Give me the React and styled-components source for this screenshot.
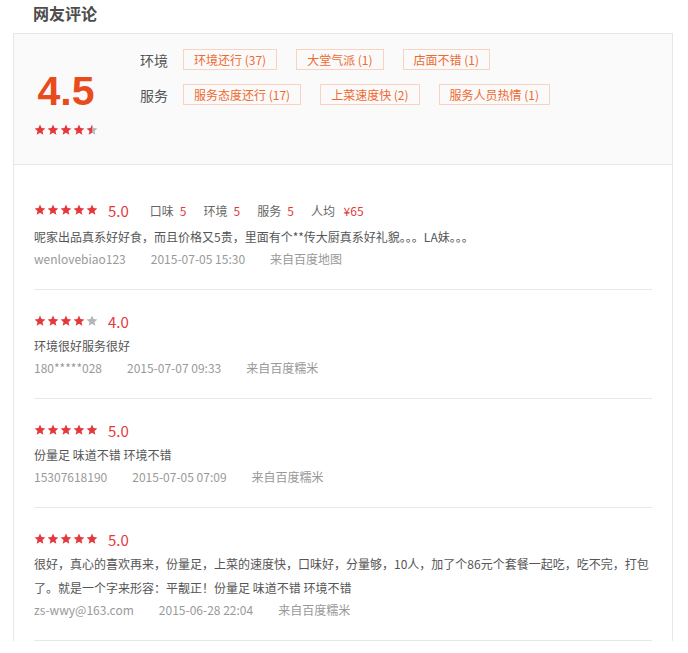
import React from 'react';
import styled, { createGlobalStyle } from 'styled-components';

const GlobalStyle = createGlobalStyle`
  html, body {
    margin: 0;
    padding: 0;
    overflow: hidden;
    background: #fff;
  }
  body {
    font-family: "Noto Sans CJK SC", "Liberation Sans", sans-serif;
    color: #555;
  }
`;

const Page = styled.div`
  width: 688px;
`;

const Title = styled.h2`
  margin: 0;
  height: 33px;
  line-height: 27px;
  padding-left: 33px;
  font-size: 16px;
  font-weight: bold;
  color: #4d4d4d;
`;

const Panel = styled.section`
  margin-left: 13px;
  width: 660px;
  box-sizing: border-box;
  border: 1px solid #e6e6e6;
  border-bottom: none;
`;

const Summary = styled.div`
  display: flex;
  height: 130px;
  background: #fafafa;
  border-bottom: 1px solid #e6e6e6;
`;

const ScoreBox = styled.div`
  width: 104px;
  padding-top: 36px;
  display: flex;
  flex-direction: column;
  align-items: center;
`;

const BigScore = styled.div`
  font-size: 41px;
  line-height: 42px;
  font-weight: bold;
  color: #e84c1d;
  font-family: "Liberation Sans", "Noto Sans CJK SC", sans-serif;
`;

const Stars = styled.div`
  display: flex;
  gap: 1px;
  margin-top: ${p => p.$top || 0}px;
`;

const Tags = styled.div`
  margin-left: 22px;
  padding-top: 15px;
  display: flex;
  flex-direction: column;
  gap: 14px;
`;

const TagRow = styled.div`
  display: flex;
  align-items: center;
`;

const TagLabel = styled.span`
  font-size: 14px;
  color: #555;
  margin-right: 15px;
`;

const Tag = styled.span`
  height: 21px;
  box-sizing: border-box;
  line-height: 19px;
  padding: 0 10px;
  margin-right: 19px;
  border: 1px solid #f9d3bf;
  font-size: 12px;
  color: #f0692e;
`;

const List = styled.div`
  padding: 12px 20px 0;
`;

const Review = styled.div`
  padding: 21px 0 20px;
  border-bottom: 1px solid #e8e8e8;
`;

const Head = styled.div`
  display: flex;
  align-items: center;
  height: ${p => (p.$tall ? 24 : 20)}px;
  margin-bottom: 3px;
`;

const Score = styled.span`
  margin-left: 10px;
  font-size: 15px;
  color: #e4393c;
`;

const Subs = styled.div`
  display: flex;
  margin-left: 21px;
  gap: 17px;
  font-size: 12px;
  color: #666;
`;

const SubValue = styled.span`
  margin-left: 6px;
  color: #e4393c;
`;

const Content = styled.p`
  margin: 0;
  font-size: 12px;
  line-height: 24px;
  color: #555;
`;

const Meta = styled.div`
  display: flex;
  gap: 25px;
  font-size: 12px;
  line-height: 20px;
  color: #999;
`;

const STAR = 'M6 0.6 L7.55 4.1 L11.4 4.45 L8.5 7 L9.35 10.8 L6 8.8 L2.65 10.8 L3.5 7 L0.6 4.45 L4.45 4.1 Z';

const Star = ({ fill }) => {
  const id = React.useId();
  return (
    <svg width="12" height="12" viewBox="0 0 12 12">
      <defs>
        <linearGradient id={id}>
          <stop offset={fill} stopColor="#e4393c" />
          <stop offset={fill} stopColor="#b5b5b5" />
        </linearGradient>
      </defs>
      <path d={STAR} fill={`url(#${id})`} />
    </svg>
  );
};

const StarBar = ({ value, top }) => (
  <Stars $top={top}>
    {[0, 1, 2, 3, 4].map(i => (
      <Star key={i} fill={Math.max(0, Math.min(1, value - i))} />
    ))}
  </Stars>
);

const tagRows = [
  { label: '环境', tags: ['环境还行 (37)', '大堂气派 (1)', '店面不错 (1)'] },
  { label: '服务', tags: ['服务态度还行 (17)', '上菜速度快 (2)', '服务人员热情 (1)'] },
];

const reviews = [
  {
    score: 5,
    subs: [['口味', '5'], ['环境', '5'], ['服务', '5'], ['人均', '\u00a0¥65']],
    text: '呢家出品真系好好食，而且价格又5贵，里面有个**传大厨真系好礼貌。。。LA妹。。。',
    user: 'wenlovebiao123',
    time: '2015-07-05 15:30',
    from: '来自百度地图',
  },
  { score: 4, text: '环境很好服务很好', user: '180*****028', time: '2015-07-07 09:33', from: '来自百度糯米' },
  { score: 5, text: '份量足 味道不错 环境不错', user: '15307618190', time: '2015-07-05 07:09', from: '来自百度糯米' },
  {
    score: 5,
    text: '很好，真心的喜欢再来，份量足，上菜的速度快，口味好，分量够，10人，加了个86元个套餐一起吃，吃不完，打包了。就是一个字来形容：平靓正！份量足 味道不错 环境不错',
    user: 'zs-wwy@163.com',
    time: '2015-06-28 22:04',
    from: '来自百度糯米',
  },
];

export default function App() {
  return (
    <Page>
      <GlobalStyle />
      <Title>网友评论</Title>
      <Panel>
        <Summary>
          <ScoreBox>
            <BigScore>4.5</BigScore>
            <StarBar value={4.5} top={12} />
          </ScoreBox>
          <Tags>
            {tagRows.map(row => (
              <TagRow key={row.label}>
                <TagLabel>{row.label}</TagLabel>
                {row.tags.map(t => <Tag key={t}>{t}</Tag>)}
              </TagRow>
            ))}
          </Tags>
        </Summary>
        <List>
          {reviews.map((r, i) => (
            <Review key={i}>
              <Head $tall={!!r.subs}>
                <StarBar value={r.score} />
                <Score>{r.score.toFixed(1)}</Score>
                {r.subs && (
                  <Subs>
                    {r.subs.map(([k, v]) => (
                      <span key={k}>{k}<SubValue>{v}</SubValue></span>
                    ))}
                  </Subs>
                )}
              </Head>
              <Content>{r.text}</Content>
              <Meta>
                <span>{r.user}</span>
                <span>{r.time}</span>
                <span>{r.from}</span>
              </Meta>
            </Review>
          ))}
        </List>
      </Panel>
    </Page>
  );
}
